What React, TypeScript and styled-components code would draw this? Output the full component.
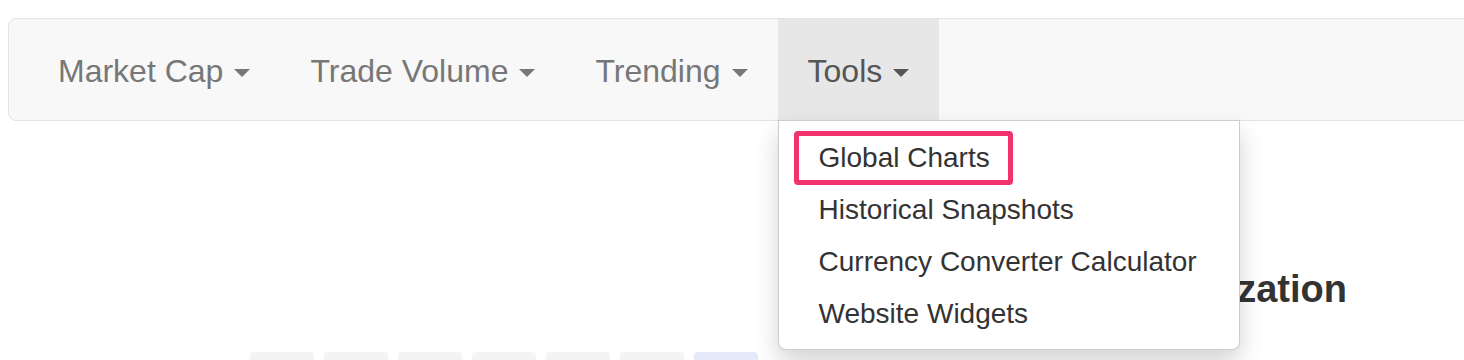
import React from "react";
import styled, { createGlobalStyle } from "styled-components";

const Global = createGlobalStyle`
  html, body { margin: 0; padding: 0; background: #fff; }
  body { font-family: "Liberation Sans", Arial, Helvetica, sans-serif; overflow: hidden; }
  * { box-sizing: border-box; }
`;

const Page = styled.div`
  width: 1464px;
  height: 360px;
  padding: 18px 0 0 8px;
  overflow: hidden;
`;

const Navbar = styled.nav`
  position: relative;
  z-index: 2;
  width: 1500px;
  height: 103px;
  background: #f8f8f8;
  border: 1px solid #e3e3e3;
  border-radius: 8px;
  display: flex;
  padding-left: 19px;
`;

const NavList = styled.ul`
  list-style: none;
  margin: 0;
  padding: 0;
  display: flex;
`;

const NavItem = styled.li<{ $open?: boolean }>`
  position: relative;
  height: 101px;
  display: flex;
  align-items: center;
  padding: 4px 30px 0 30px;
  font-size: 32px;
  color: ${(p) => (p.$open ? "#555" : "#777")};
  background: ${(p) => (p.$open ? "#e7e7e7" : "transparent")};
  white-space: nowrap;
`;

const Caret = styled.span`
  display: inline-block;
  width: 0;
  height: 0;
  margin-left: 11px;
  margin-top: 3px;
  border-top: 8px solid currentColor;
  border-left: 8px solid transparent;
  border-right: 8px solid transparent;
`;

const Menu = styled.ul`
  position: absolute;
  top: 100%;
  left: 0;
  width: 462px;
  margin: 0;
  padding: 10px 0;
  list-style: none;
  background: #fff;
  border: 1px solid rgba(0, 0, 0, 0.2);
  border-radius: 0 0 8px 8px;
  box-shadow: 0 12px 24px rgba(0, 0, 0, 0.175);
`;

const MenuItem = styled.li`
  position: relative;
  height: 52px;
  padding: 1px 40px 0 40px;
  display: flex;
  align-items: center;
  font-size: 28px;
  color: #333;
  white-space: nowrap;
`;

const Highlight = styled.span`
  position: absolute;
  top: 0;
  left: 15px;
  width: 219px;
  height: 54px;
  border: 5px solid #f2326b;
  border-radius: 4px;
`;

const Content = styled.div`
  display: flex;
  flex-direction: column;
  align-items: flex-end;
  padding-right: 117px;
`;

const Heading = styled.h1`
  margin: 145px 0 0 0;
  font-size: 38px;
  font-weight: bold;
  color: #333;
  line-height: 46px;
  white-space: nowrap;
`;

const ButtonRow = styled.div`
  display: flex;
  gap: 10px;
  margin-top: 40px;
  padding-left: 242px;
`;

const RangeButton = styled.div<{ $active?: boolean }>`
  width: 64px;
  height: 30px;
  border-radius: 4px;
  background: ${(p) => (p.$active ? "#e6e9f8" : "#f4f4f4")};
`;

const navItems = ["Market Cap", "Trade Volume", "Trending", "Tools"];
const tools = [
  "Global Charts",
  "Historical Snapshots",
  "Currency Converter Calculator",
  "Website Widgets",
];

export default function App() {
  return (
    <>
      <Global />
      <Page>
        <Navbar>
          <NavList>
            {navItems.map((n) => (
              <NavItem key={n} $open={n === "Tools"}>
                {n}
                <Caret />
                {n === "Tools" && (
                  <Menu>
                    {tools.map((t, i) => (
                      <MenuItem key={t}>
                        {i === 0 && <Highlight />}
                        {t}
                      </MenuItem>
                    ))}
                  </Menu>
                )}
              </NavItem>
            ))}
          </NavList>
        </Navbar>
        <Content>
          <Heading>Total Market Capitalization</Heading>
        </Content>
        <ButtonRow>
          {[0, 1, 2, 3, 4, 5, 6].map((i) => (
            <RangeButton key={i} $active={i === 6} />
          ))}
        </ButtonRow>
      </Page>
    </>
  );
}
